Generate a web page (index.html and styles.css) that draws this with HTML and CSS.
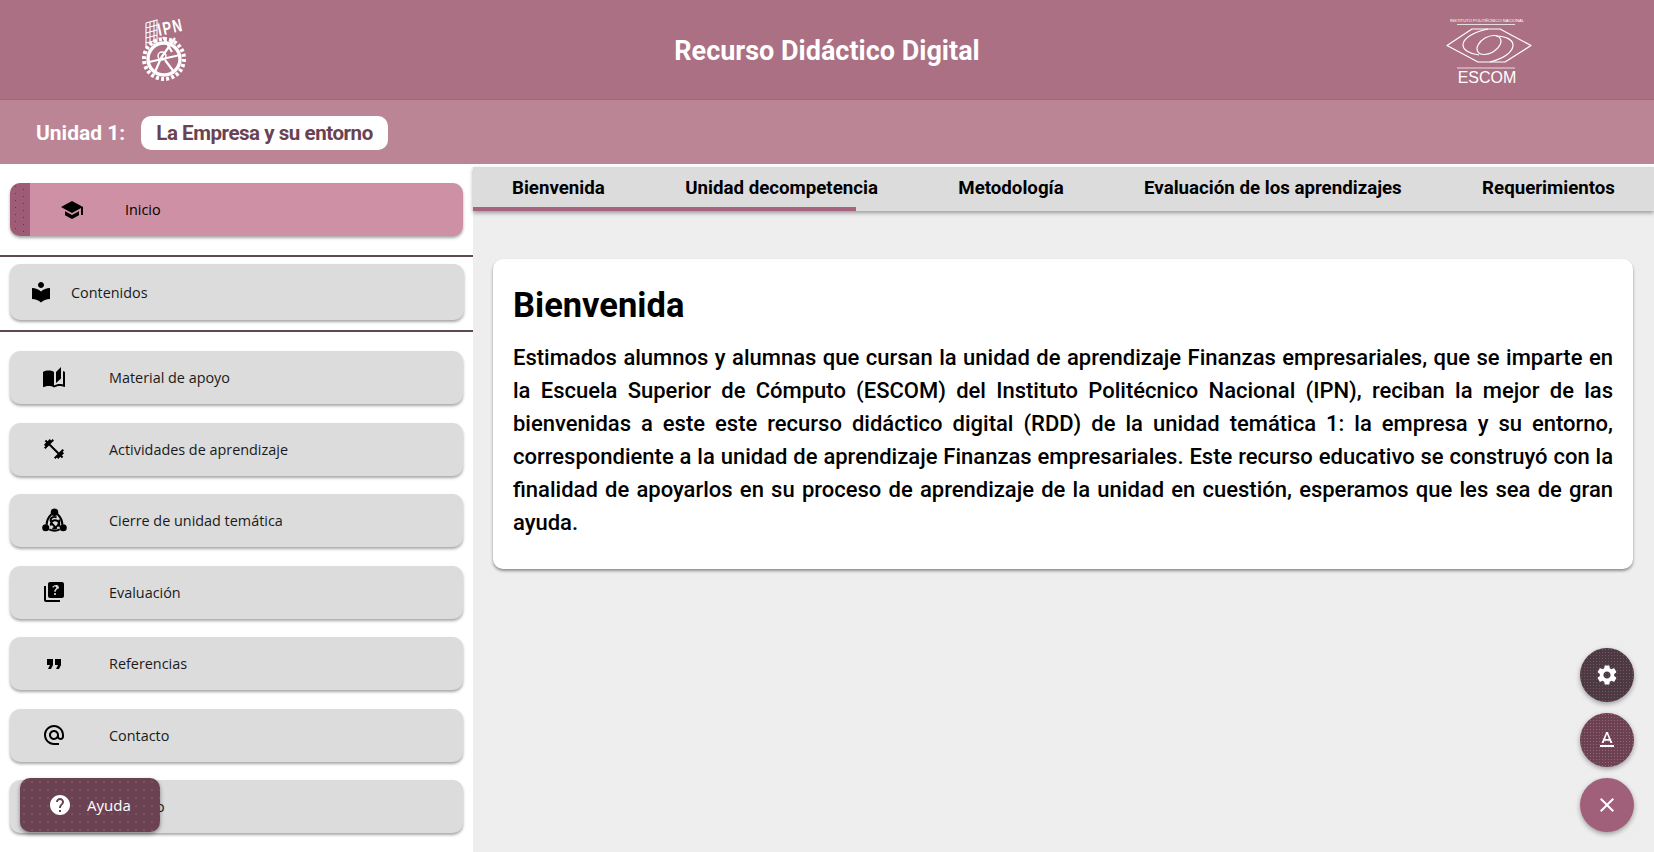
FILE: index.html
```html
<!DOCTYPE html>
<html lang="es">
<head>
  <meta charset="UTF-8" />
  <title>Recurso Didáctico Digital</title>
  <link rel="stylesheet" href="styles.css">
</head>
<body>
  <header class="top-bar">
    <div class="logo-slot">
      <svg class="logo-ipn" viewBox="0 0 46 66" fill="none" stroke="#fff">
        <g stroke-width="1.1">
          <path d="M4 6 L15 3 V28 M4 6 V30 M4 11 L15 8 M4 16 L15 13 M4 21 L15 18 M4 26 L15 23 M8 5 V28 M12 4 V28"/>
        </g>
        <text class="ipn-text" transform="rotate(-12 17 19) translate(17 19) scale(.72 1)">IPN</text>
        <circle cx="22" cy="42" r="20" stroke-width="4" stroke-dasharray="3 2.2"/>
        <circle cx="22" cy="42" r="16" stroke-width="3.4"/>
        <path d="M21 20 L30 35 M33 21 L19 41 M7 45 L38 38 M19 41 L13 55 M23 43 L32 55" stroke-width="2.2"/>
        <circle cx="20" cy="39" r="4" stroke-width="1.5"/>
      </svg>
    </div>
    <h1 class="app-title">Recurso Didáctico Digital</h1>
    <div class="logo-slot">
      <svg class="logo-escom" viewBox="0 0 86 68" fill="none" stroke="#fff">
        <text class="escom-small" x="41" y="5">INSTITUTO POLITÉCNICO NACIONAL</text>
        <path d="M11 7.5 H69 M11 51 H69" stroke="#e6dde0" stroke-width="1"/>
        <path d="M26 12 H54 L85 28.5 L59 45 H32 L1 28.5 Z" stroke-width="1.2" stroke-linejoin="round"/>
        <path d="M42 12 C28 15 17 21 17 28 C17 33 24 37 33 38 M44 45 C60 41 67 34 67 28 C67 23 60 19 50 19" stroke-width="1.2"/>
        <ellipse cx="43" cy="28" rx="13" ry="8" transform="rotate(-30 43 28)" stroke-width="1.2"/>
        <text class="escom-text" x="41" y="66">ESCOM</text>
      </svg>
    </div>
  </header>

  <div class="unit-bar">
    <span class="unit-label">Unidad 1:</span>
    <span class="unit-name">La Empresa y su entorno</span>
  </div>

  <div class="layout">
    <nav class="sidebar">
      <div class="nav-group">
        <a class="nav-item nav-active">
          <span class="nav-icon">
            <svg viewBox="0 0 24 24"><path d="M5 13.18v4L12 21l7-3.82v-4L12 17l-7-3.82zM12 3 1 9l11 6 9-4.91V17h2V9L12 3z"/></svg>
          </span>
          <span>Inicio</span>
        </a>
      </div>
      <div class="nav-group nav-group-short">
        <a class="nav-item nav-compact">
          <span class="nav-icon">
            <svg viewBox="0 0 24 24"><path d="M12 11.55C9.64 9.35 6.48 8 3 8v11c3.48 0 6.64 1.35 9 3.55 2.36-2.19 5.52-3.55 9-3.55V8c-3.48 0-6.64 1.35-9 3.55zM12 8c1.66 0 3-1.34 3-3s-1.34-3-3-3-3 1.34-3 3 1.34 3 3 3z"/></svg>
          </span>
          <span>Contenidos</span>
        </a>
      </div>
      <div class="nav-list">
        <a class="nav-item">
          <span class="nav-icon">
            <svg viewBox="0 0 24 24"><path d="M19 1l-5 5v11l5-4.5V1zM1 6v14.65c0 .25.25.5.5.5.1 0 .15-.05.25-.05C3.1 20.45 5.05 20 6.5 20c1.95 0 4.05.4 5.5 1.5V6c-1.45-1.1-3.55-1.5-5.5-1.5S2.45 4.9 1 6zm22 13.5V6c-.6-.45-1.25-.75-2-1v13.5c-1.1-.35-2.3-.5-3.5-.5-1.7 0-4.15.65-5.5 1.5v2c1.35-.85 3.8-1.5 5.5-1.5 1.65 0 3.35.3 4.75 1.05.1.05.15.05.25.05.25 0 .5-.25.5-.5v-1.1z"/></svg>
          </span>
          <span>Material de apoyo</span>
        </a>
        <a class="nav-item">
          <span class="nav-icon">
            <svg viewBox="0 0 24 24"><path d="M20.57 14.86 22 13.43 20.57 12 17 15.57 8.43 7 12 3.43 10.57 2 9.14 3.43 7.71 2 5.57 4.14 4.14 2.71 2.71 4.14l1.43 1.43L2 7.71l1.43 1.43L2 10.57 3.43 12 7 8.43 15.57 17 12 20.57 13.43 22l1.43-1.43L16.29 22l2.14-2.14 1.43 1.43 1.43-1.43-1.43-1.43L22 16.29z"/></svg>
          </span>
          <span>Actividades de aprendizaje</span>
        </a>
        <a class="nav-item">
          <span class="nav-icon">
            <svg class="icon-wide" viewBox="0 0 24 24">
              <circle cx="12" cy="4" r="3.6"/><circle cx="3.6" cy="19" r="3.4"/><circle cx="20.4" cy="19" r="3.4"/>
              <path d="M9 6 C6 9 4.5 12 4.5 16 M15 6 C18 9 19.5 12 19.5 16 M7 20.5 C10 22 14 22 17 20.5" fill="none" stroke="#000" stroke-width="2"/>
              <path d="M14 9 C10 7.5 7.5 10 8.5 13 C9.5 16 12 17 14 20 M8.5 17 C8 13 11 11 14 12 C17 13 17 16 16 18 M10 20 C13 19 17 16 17 11" fill="none" stroke="#000" stroke-width="1.9"/>
            </svg>
          </span>
          <span>Cierre de unidad temática</span>
        </a>
        <a class="nav-item">
          <span class="nav-icon">
            <svg viewBox="0 0 24 24"><path d="M4 6H2v14c0 1.1.9 2 2 2h14v-2H4V6zm16-4H8c-1.1 0-2 .9-2 2v12c0 1.1.9 2 2 2h12c1.1 0 2-.9 2-2V4c0-1.1-.9-2-2-2zm-7.01 13c-.59 0-1.05-.47-1.05-1.05 0-.59.47-1.04 1.05-1.04.59 0 1.04.45 1.04 1.04-.01.58-.45 1.05-1.04 1.05zm2.5-6.17c-.63.93-1.23 1.21-1.56 1.81-.13.24-.18.4-.18 1.18h-1.52c0-.41-.06-1.08.26-1.65.41-.73 1.18-1.16 1.63-1.8.48-.68.21-1.94-1.14-1.94-.88 0-1.32.67-1.5 1.23l-1.37-.57C11.51 5.96 12.52 5 13.99 5c1.23 0 2.08.56 2.51 1.26.37.61.58 1.73.01 2.57z"/></svg>
          </span>
          <span>Evaluación</span>
        </a>
        <a class="nav-item">
          <span class="nav-icon">
            <svg viewBox="0 0 24 24"><path d="M6 17h3l2-4V7H5v6h3zm8 0h3l2-4V7h-6v6h3z"/></svg>
          </span>
          <span>Referencias</span>
        </a>
        <a class="nav-item">
          <span class="nav-icon">
            <svg viewBox="0 0 24 24"><path d="M12 2C6.48 2 2 6.48 2 12s4.48 10 10 10h5v-2h-5c-4.34 0-8-3.66-8-8s3.66-8 8-8 8 3.66 8 8v1.43c0 .79-.71 1.57-1.5 1.57s-1.5-.78-1.5-1.57V12c0-2.76-2.24-5-5-5s-5 2.24-5 5 2.24 5 5 5c1.38 0 2.64-.56 3.54-1.47.65.89 1.77 1.47 2.96 1.47 1.97 0 3.5-1.6 3.5-3.57V12c0-5.52-4.48-10-10-10zm0 13c-1.66 0-3-1.34-3-3s1.34-3 3-3 3 1.34 3 3-1.34 3-3 3z"/></svg>
          </span>
          <span>Contacto</span>
        </a>
        <a class="nav-item">
          <span class="nav-icon"></span>
          <span>Glosario</span>
        </a>
      </div>
    </nav>

    <main class="content">
      <div class="tabs">
        <a class="tab">Bienvenida</a>
        <a class="tab">Unidad decompetencia</a>
        <a class="tab">Metodología</a>
        <a class="tab">Evaluación de los aprendizajes</a>
        <a class="tab">Requerimientos</a>
      </div>
      <section class="card">
        <h2>Bienvenida</h2>
        <p>Estimados alumnos y alumnas que cursan la unidad de aprendizaje Finanzas empresariales, que se imparte en la Escuela Superior de Cómputo (ESCOM) del Instituto Politécnico Nacional (IPN), reciban la mejor de las bienvenidas a este este recurso didáctico digital (RDD) de la unidad temática 1: la empresa y su entorno, correspondiente a la unidad de aprendizaje Finanzas empresariales. Este recurso educativo se construyó con la finalidad de apoyarlos en su proceso de aprendizaje de la unidad en cuestión, esperamos que les sea de gran ayuda.</p>
      </section>
    </main>
  </div>

  <a class="help-btn">
    <svg viewBox="0 0 24 24"><path d="M12 2C6.48 2 2 6.48 2 12s4.48 10 10 10 10-4.48 10-10S17.52 2 12 2zm1 17h-2v-2h2v2zm2.07-7.75-.9.92C13.45 12.9 13 13.5 13 15h-2v-.5c0-1.1.45-2.1 1.17-2.83l1.24-1.26c.37-.36.59-.86.59-1.41 0-1.1-.9-2-2-2s-2 .9-2 2H8c0-2.21 1.79-4 4-4s4 1.79 4 4c0 .88-.36 1.68-.93 2.25z"/></svg>
    <span>Ayuda</span>
  </a>

  <div class="fab-stack">
    <button class="fab fab-dark">
      <svg viewBox="0 0 24 24"><path d="M19.14 12.94c.04-.3.06-.61.06-.94 0-.32-.02-.64-.07-.94l2.03-1.58c.18-.14.23-.41.12-.61l-1.92-3.32c-.12-.22-.37-.29-.59-.22l-2.39.96c-.5-.38-1.03-.7-1.62-.94l-.36-2.54c-.04-.24-.24-.41-.48-.41h-3.84c-.24 0-.43.17-.47.41l-.36 2.54c-.59.24-1.13.57-1.62.94l-2.39-.96c-.22-.08-.47 0-.59.22L2.74 8.87c-.12.21-.08.47.12.61l2.03 1.58c-.05.3-.09.63-.09.94s.02.64.07.94l-2.03 1.58c-.18.14-.23.41-.12.61l1.92 3.32c.12.22.37.29.59.22l2.39-.96c.5.38 1.03.7 1.62.94l.36 2.54c.05.24.24.41.48.41h3.84c.24 0 .44-.17.47-.41l.36-2.54c.59-.24 1.13-.56 1.62-.94l2.39.96c.22.08.47 0 .59-.22l1.92-3.32c.12-.22.07-.47-.12-.61l-2.01-1.58zM12 15.6c-1.98 0-3.6-1.62-3.6-3.6s1.62-3.6 3.6-3.6 3.6 1.62 3.6 3.6-1.62 3.6-3.6 3.6z"/></svg>
    </button>
    <button class="fab fab-mid">
      <svg viewBox="0 0 24 24"><path d="M5 17v2h14v-2H5zm4.5-4.2h5l.9 2.2h2.1L12.75 4h-1.5L6.5 15h2.1l.9-2.2zM12 5.98 13.87 11h-3.74L12 5.98z"/></svg>
    </button>
    <button class="fab fab-light">
      <svg viewBox="0 0 24 24"><path d="M19 6.41 17.59 5 12 10.59 6.41 5 5 6.41 10.59 12 5 17.59 6.41 19 12 13.41 17.59 19 19 17.59 13.41 12z"/></svg>
    </button>
  </div>
</body>
</html>
```

FILE: styles.css
```css
html, body {
  height: 100%;
}

body {
  margin: 0;
  overflow: hidden;
  font-family: "Open Sans", "Noto Sans", sans-serif;
  background-color: #eeeeee;
  color: #000;
}

a {
  color: inherit;
  text-decoration: none;
}

.top-bar {
  height: 99px;
  display: grid;
  grid-template-columns: 328px 1fr 328px;
  align-items: center;
  background-color: #ab7083;
  border-bottom: 1px solid #a3687b;
  color: #fff;
}

.logo-slot {
  display: flex;
  justify-content: center;
}

.logo-ipn {
  width: 46px;
  height: 66px;
  margin-left: 2px;
  overflow: visible;
}

.ipn-text {
  fill: #fff;
  stroke: none;
  font-family: "Liberation Sans", sans-serif;
  font-size: 18px;
  font-weight: bold;
  letter-spacing: 2px;
}

.logo-escom {
  width: 86px;
  height: 68px;
  margin: 3px 2px 0 0;
}

.escom-small {
  fill: #fff;
  stroke: none;
  font-family: "Liberation Sans", sans-serif;
  font-size: 4.2px;
  text-anchor: middle;
}

.escom-text {
  fill: #fff;
  stroke: none;
  font-family: "Liberation Sans", sans-serif;
  font-size: 16px;
  text-anchor: middle;
}

.app-title {
  margin: 2px 0 0;
  text-align: center;
  font-family: Roboto, sans-serif;
  font-size: 27px;
  font-weight: 700;
}

.unit-bar {
  height: 62px;
  display: flex;
  align-items: center;
  gap: 16px;
  padding: 2px 0 0 36px;
  background-color: #bb8596;
  font-family: Roboto, sans-serif;
  font-weight: 700;
}

.unit-label {
  color: #fff;
  font-size: 21px;
}

.unit-name {
  padding: 5px 15px;
  background-color: #fff;
  border-radius: 10px;
  color: #6b4252;
  font-size: 20.5px;
  letter-spacing: -0.45px;
}

.layout {
  display: flex;
  height: 688px;
  border-top: 3px solid #fff;
}

.sidebar {
  width: 473px;
  flex-shrink: 0;
  background-color: #fff;
  overflow: hidden;
}

.nav-group {
  padding: 16px 10px 19px;
  border-bottom: 2px solid #5e4a54;
}

.nav-group-short {
  padding: 7px 9px 10px 10px;
}

.nav-list {
  display: flex;
  flex-direction: column;
  gap: 18.5px;
  padding: 19px 10px;
}

.nav-item {
  height: 53px;
  display: flex;
  align-items: center;
  flex-shrink: 0;
  background-color: #dcdcdc;
  border-radius: 10px;
  box-shadow: 0 2px 3px rgba(0, 0, 0, 0.35);
  color: #1a1a1a;
  font-size: 14.4px;
}

.nav-icon {
  width: 88px;
  margin-right: 11px;
  display: flex;
  justify-content: center;
}

.nav-icon svg {
  width: 24px;
  height: 24px;
}

.nav-icon .icon-wide {
  width: 25px;
  height: 25px;
}

.nav-active {
  background-color: #cd90a5;
  background-image:
    radial-gradient(circle, #4a4048 0.7px, transparent 0.9px),
    radial-gradient(circle, #4a4048 0.7px, transparent 0.9px),
    linear-gradient(#9e5c77, #9e5c77);
  background-repeat: repeat-y, repeat-y, no-repeat;
  background-size: 7px 7px, 7px 7px, 20px 100%;
  background-position: 2px 0, 10px 3px, 0 0;
  color: #000;
}

.nav-active .nav-icon {
  width: 100px;
  margin-left: 12px;
  margin-right: 3px;
}

.nav-compact {
  height: 56px;
}

.nav-compact .nav-icon {
  width: 61px;
  margin-right: 0;
}

.content {
  flex: 1;
  min-width: 0;
}

.tabs {
  height: 44px;
  display: flex;
  align-items: center;
  justify-content: space-between;
  box-sizing: border-box;
  padding: 0 39px 3px;
  background-color: #dcdcdc;
  box-shadow: 0 2px 4px rgba(0, 0, 0, 0.35);
  background-image: linear-gradient(#a8647e, #a8647e);
  background-repeat: no-repeat;
  background-size: 383px 4px;
  background-position: left bottom;
  font-family: Roboto, sans-serif;
  font-size: 18.7px;
  font-weight: 700;
}

.card {
  margin: 48px 21px 0 20px;
  padding: 23px 20px 30px;
  background-color: #fff;
  border-radius: 10px;
  box-shadow: 0 2px 3px rgba(0, 0, 0, 0.4);
  font-family: Roboto, sans-serif;
}

.card h2 {
  margin: 0 0 13px;
  font-size: 34.5px;
  line-height: 46px;
  font-weight: 700;
}

.card p {
  margin: 0;
  font-size: 22px;
  line-height: 33px;
  font-weight: 500;
  text-align: justify;
}

.help-btn {
  position: absolute;
  left: 20px;
  top: 778px;
  width: 140px;
  height: 54px;
  display: flex;
  align-items: center;
  gap: 15px;
  padding-left: 28px;
  box-sizing: border-box;
  background-color: #6b4252;
  background-image: radial-gradient(circle, rgba(200, 140, 165, 0.4) 0.6px, transparent 0.8px);
  background-size: 8px 8px;
  border-radius: 10px;
  box-shadow: 0 2px 4px rgba(0, 0, 0, 0.4);
  color: #fff;
  font-size: 15px;
}

.help-btn svg {
  width: 24px;
  height: 24px;
  fill: #fff;
}

.fab-stack {
  position: absolute;
  right: 20px;
  top: 648px;
  display: flex;
  flex-direction: column;
  gap: 11px;
}

.fab {
  width: 54px;
  height: 54px;
  display: flex;
  align-items: center;
  justify-content: center;
  padding: 0;
  border: none;
  border-radius: 50%;
  box-shadow: 0 2px 5px rgba(0, 0, 0, 0.35);
}

.fab svg {
  width: 24px;
  height: 24px;
  fill: #fff;
}

.fab-dark {
  background-color: #4c3a42;
  background-image: radial-gradient(circle, #7d5266 0.6px, transparent 0.9px);
  background-size: 3px 3px;
}

.fab-mid {
  background-color: #6b4252;
  background-image: radial-gradient(circle, #a0607a 0.6px, transparent 0.9px);
  background-size: 3px 3px;
}

.fab-light {
  background-color: #a0607a;
}
```
